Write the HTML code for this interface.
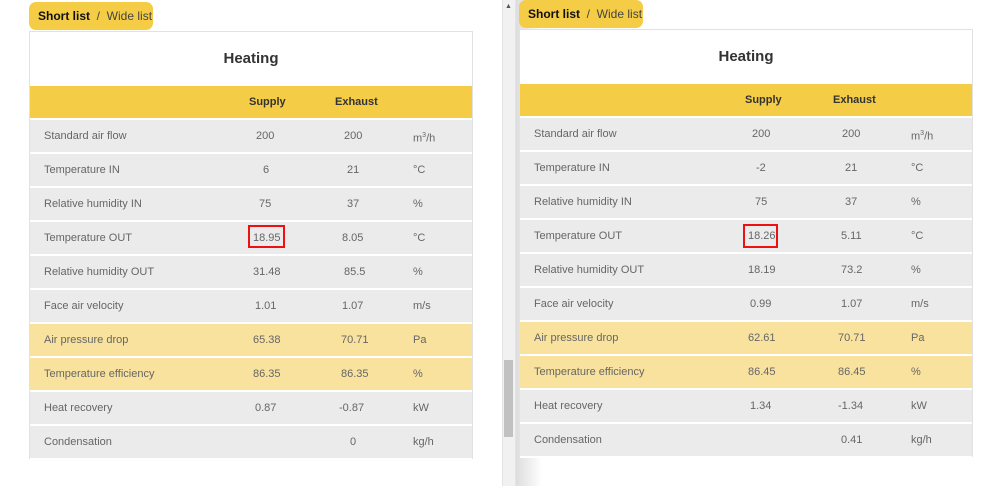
<!DOCTYPE html>
<html><head><style>
*{margin:0;padding:0;box-sizing:border-box}
body{width:1000px;height:486px;background:#fff;position:relative;overflow:hidden;font-family:"Liberation Sans",sans-serif;color:#666}
.tab{position:absolute;width:124px;height:28px;background:#f5cc45;border-radius:7px;font-size:12px;line-height:28px;padding-left:9px;color:#444;white-space:nowrap}
.tab b{color:#111;font-weight:bold}
.card{position:absolute;background:#fff;border:1px solid #e2e2e2}
.h{height:54px;text-align:center;font-size:15px;font-weight:bold;color:#333;line-height:54px}
.row{position:relative;height:34px;background:#ebebeb;border-bottom:2px solid #fff;font-size:11px;line-height:32px;white-space:nowrap}
.row.y{background:#f8e29d}
.row.hd{background:#f5cc45;font-weight:bold;color:#333}
.row span{position:absolute;top:0}
.rb{position:absolute;border:2px solid #e11;}
</style></head><body>
<div style="position:absolute;left:502px;top:0;width:14px;height:486px;background:#f1f1f1;border-left:1px solid #e4e4e4;border-right:1px solid #e4e4e4"></div>
<div style="position:absolute;left:505px;top:3px;font-size:7px;color:#555">▲</div>
<div style="position:absolute;left:504px;top:360px;width:9px;height:77px;background:#c1c1c1"></div>
<div style="position:absolute;left:516px;top:0;width:26px;height:486px;background:linear-gradient(90deg,#ddd,#fff)"></div>

<div class="tab" style="left:29px;top:2px"><b>Short list</b>&nbsp; / &nbsp;Wide list</div>
<div class="card" style="left:29px;top:31px;width:444px;height:428px">
<div class="h">Heating</div>
<div class="row hd"><span style="left:219px">Supply</span><span style="left:305px">Exhaust</span></div>
<div class="row"><span style="left:14px">Standard air flow</span><span style="left:226px">200</span><span style="left:314px">200</span><span style="left:383px">m<sup style="font-size:7px">3</sup>/h</span></div>
<div class="row"><span style="left:14px">Temperature IN</span><span style="left:233px">6</span><span style="left:317px">21</span><span style="left:383px">°C</span></div>
<div class="row"><span style="left:14px">Relative humidity IN</span><span style="left:229px">75</span><span style="left:317px">37</span><span style="left:383px">%</span></div>
<div class="row"><span style="left:14px">Temperature OUT</span><span style="left:223px">18.95</span><span style="left:312px">8.05</span><span style="left:383px">°C</span></div>
<div class="row"><span style="left:14px">Relative humidity OUT</span><span style="left:223px">31.48</span><span style="left:314px">85.5</span><span style="left:383px">%</span></div>
<div class="row"><span style="left:14px">Face air velocity</span><span style="left:225px">1.01</span><span style="left:312px">1.07</span><span style="left:383px">m/s</span></div>
<div class="row y"><span style="left:14px">Air pressure drop</span><span style="left:223px">65.38</span><span style="left:311px">70.71</span><span style="left:383px">Pa</span></div>
<div class="row y"><span style="left:14px">Temperature efficiency</span><span style="left:223px">86.35</span><span style="left:311px">86.35</span><span style="left:383px">%</span></div>
<div class="row"><span style="left:14px">Heat recovery</span><span style="left:225px">0.87</span><span style="left:309px">-0.87</span><span style="left:383px">kW</span></div>
<div class="row"><span style="left:14px">Condensation</span><span style="left:320px">0</span><span style="left:383px">kg/h</span></div>
</div>
<div class="rb" style="left:248px;top:225px;width:37px;height:23px"></div>

<div class="tab" style="left:519px;top:0"><b>Short list</b>&nbsp; / &nbsp;Wide list</div>
<div class="card" style="left:519px;top:29px;width:454px;height:428px">
<div class="h">Heating</div>
<div class="row hd"><span style="left:225px">Supply</span><span style="left:313px">Exhaust</span></div>
<div class="row"><span style="left:14px">Standard air flow</span><span style="left:232px">200</span><span style="left:322px">200</span><span style="left:391px">m<sup style="font-size:7px">3</sup>/h</span></div>
<div class="row"><span style="left:14px">Temperature IN</span><span style="left:236px">-2</span><span style="left:325px">21</span><span style="left:391px">°C</span></div>
<div class="row"><span style="left:14px">Relative humidity IN</span><span style="left:235px">75</span><span style="left:325px">37</span><span style="left:391px">%</span></div>
<div class="row"><span style="left:14px">Temperature OUT</span><span style="left:228px">18.26</span><span style="left:321px">5.11</span><span style="left:391px">°C</span></div>
<div class="row"><span style="left:14px">Relative humidity OUT</span><span style="left:228px">18.19</span><span style="left:321px">73.2</span><span style="left:391px">%</span></div>
<div class="row"><span style="left:14px">Face air velocity</span><span style="left:230px">0.99</span><span style="left:321px">1.07</span><span style="left:391px">m/s</span></div>
<div class="row y"><span style="left:14px">Air pressure drop</span><span style="left:228px">62.61</span><span style="left:318px">70.71</span><span style="left:391px">Pa</span></div>
<div class="row y"><span style="left:14px">Temperature efficiency</span><span style="left:228px">86.45</span><span style="left:318px">86.45</span><span style="left:391px">%</span></div>
<div class="row"><span style="left:14px">Heat recovery</span><span style="left:230px">1.34</span><span style="left:318px">-1.34</span><span style="left:391px">kW</span></div>
<div class="row"><span style="left:14px">Condensation</span><span style="left:321px">0.41</span><span style="left:391px">kg/h</span></div>
</div>
<div class="rb" style="left:743px;top:224px;width:35px;height:24px"></div>
</body></html>
